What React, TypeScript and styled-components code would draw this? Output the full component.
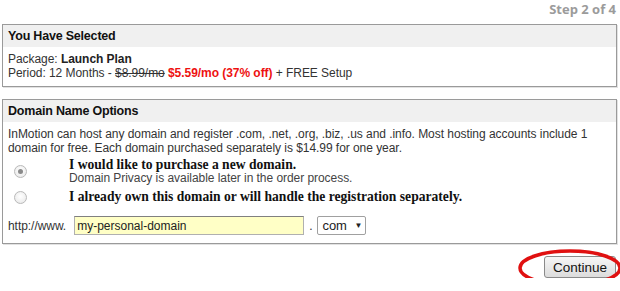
import React, { FC } from 'react'
import styled, { createGlobalStyle } from 'styled-components'

const GlobalStyle = createGlobalStyle`
  html, body {
    margin: 0;
    padding: 0;
    background: #ffffff;
  }
  body {
    font-family: "Liberation Sans", Arial, sans-serif;
    font-size: 12px;
    color: #222;
  }
`

const Page = styled.div`
  width: 615px;
  padding: 0 0 0 2px;
`
const StepLabel = styled.div`
  height: 24px;
  line-height: 19px;
  text-align: right;
  font-family: "Open Sans", sans-serif;
  font-weight: bold;
  font-size: 13px;
  color: #9b9b9b;
  padding-right: 1px;
`
const Panel = styled.div<{ gapAfter?: number }>`
  border: 1px solid #9a9a9a;
  box-shadow: 1px 1px 0 #e2e2e2;
  margin-bottom: ${p => p.gapAfter ?? 0}px;
`
const PanelHeader = styled.div`
  height: 22px;
  line-height: 22px;
  padding: 0 5px;
  background: #f0f0f0;
  font-weight: bold;
  font-size: 12.5px;
  letter-spacing: -0.2px;
  color: #111;
`
const PanelBody = styled.div`
  padding: 5px 5px 6px;
  line-height: 14px;
  color: #333;
  letter-spacing: -0.05px;
`
const Strong = styled.b`
  color: #222;
`
const OldPrice = styled.span`
  text-decoration: line-through;
`
const NewPrice = styled.b`
  color: #ee1111;
`
const Intro = styled.p`
  margin: 0 0 3px;
`
const OptionRow = styled.label`
  display: grid;
  grid-template-columns: 61px 1fr;
  align-items: center;
  margin-bottom: 5px;
`
const Radio = styled.span<{ checked?: boolean }>`
  justify-self: start;
  margin-left: 6px;
  width: 11px;
  height: 11px;
  border-radius: 50%;
  border: 1px solid #b9b9b9;
  background: radial-gradient(circle at 50% 40%, #ffffff 0%, #e6e6e6 100%);
  display: flex;
  align-items: center;
  justify-content: center;

  &::after {
    content: '';
    width: 5px;
    height: 5px;
    border-radius: 50%;
    background: ${p => p.checked ? '#8a8a8a' : 'transparent'};
  }
`
const OptionTitle = styled.div`
  font-family: "Liberation Serif", "Times New Roman", serif;
  font-weight: bold;
  font-size: 13.6px;
  line-height: 14px;
  letter-spacing: 0;
  color: #111;
`
const OptionNote = styled.div`
  line-height: 13px;
  color: #444;
`
const DomainRow = styled.div`
  display: flex;
  align-items: center;
  gap: 5px;
  margin-top: 12px;
  margin-bottom: 2px;
  color: #333;
`
const DomainInput = styled.input`
  width: 224px;
  height: 17px;
  margin-left: 3px;
  padding: 0 2px;
  border: 1px solid #b0b0b0;
  border-top-color: #808080;
  background: #ffffc6;
  font-family: "Liberation Sans", Arial, sans-serif;
  font-size: 12px;
  color: #222;
  outline: none;
`
const TldSelect = styled.div`
  display: flex;
  align-items: center;
  justify-content: space-between;
  width: 40px;
  height: 17px;
  padding: 0 3px 0 4px;
  border: 1px solid #a0a0a0;
  border-radius: 2px;
  background: #fff;
  font-size: 13px;
  color: #222;
`
const Caret = styled.span`
  font-size: 8px;
`
const Footer = styled.div`
  position: relative;
  display: flex;
  justify-content: flex-end;
  padding-top: 12px;
`
const ContinueButton = styled.button`
  height: 22px;
  padding: 0 8px;
  margin-right: 1px;
  border: 1px solid #8a8a8a;
  border-radius: 3px;
  background: linear-gradient(#f6f6f6, #dcdcdc);
  font-family: "Liberation Sans", Arial, sans-serif;
  font-size: 13.5px;
  color: #111;
`
const Circle = styled.svg`
  position: absolute;
  right: -6px;
  top: 4px;
  pointer-events: none;
`

const App: FC = () => (
  <Page>
    <GlobalStyle />
    <StepLabel>Step 2 of 4</StepLabel>
    <Panel gapAfter={12}>
      <PanelHeader>You Have Selected</PanelHeader>
      <PanelBody>
        Package: <Strong>Launch Plan</Strong>
        <br />
        Period: 12 Months - <OldPrice>$8.99/mo</OldPrice> <NewPrice>$5.59/mo (37% off)</NewPrice> + FREE Setup
      </PanelBody>
    </Panel>
    <Panel>
      <PanelHeader>Domain Name Options</PanelHeader>
      <PanelBody>
        <Intro>
          InMotion can host any domain and register .com, .net, .org, .biz, .us and .info. Most hosting accounts include 1
          domain for free. Each domain purchased separately is $14.99 for one year.
        </Intro>
        <OptionRow>
          <Radio checked />
          <div>
            <OptionTitle>I would like to purchase a new domain.</OptionTitle>
            <OptionNote>Domain Privacy is available later in the order process.</OptionNote>
          </div>
        </OptionRow>
        <OptionRow>
          <Radio />
          <OptionTitle>I already own this domain or will handle the registration separately.</OptionTitle>
        </OptionRow>
        <DomainRow>
          http://www.
          <DomainInput defaultValue="my-personal-domain" />
          .
          <TldSelect>com <Caret>▼</Caret></TldSelect>
        </DomainRow>
      </PanelBody>
    </Panel>
    <Footer>
      <ContinueButton>Continue</ContinueButton>
      <Circle width="106" height="40" viewBox="0 0 106 40">
        <ellipse cx="53" cy="20" rx="50" ry="17" fill="none" stroke="#e01010" strokeWidth="3.5" />
      </Circle>
    </Footer>
  </Page>
)

export default App
